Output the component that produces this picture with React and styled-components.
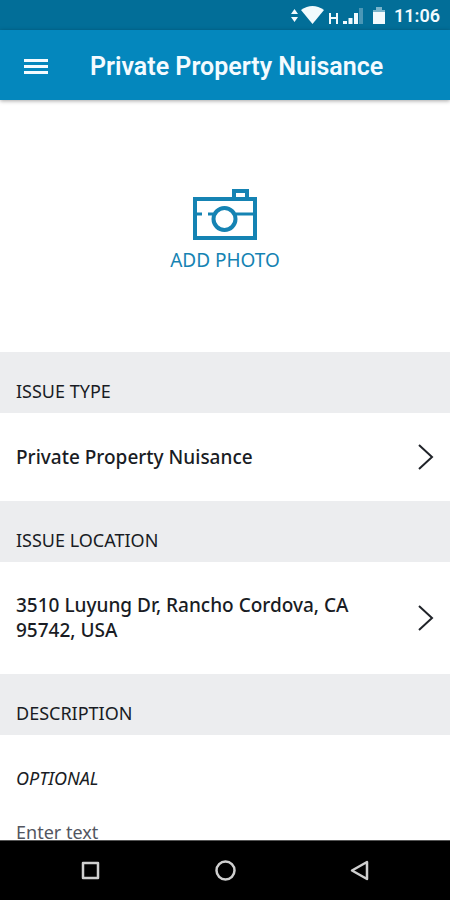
import React from "react";
import styled, { createGlobalStyle } from "styled-components";

const GlobalStyle = createGlobalStyle`
  *, *::before, *::after { box-sizing: border-box; }
  body { margin: 0; background: #fff; }
  button, textarea { font: inherit; }
`;

const Screen = styled.div`
  display: flex;
  flex-direction: column;
  height: 100vh;
  background: #fff;
  color: #191c24;
  font-family: "Noto Sans", "Open Sans", sans-serif;
  font-size: 18px;
  line-height: 25px;
`;

const StatusBar = styled.div`
  display: flex;
  flex: none;
  align-items: center;
  justify-content: flex-end;
  height: 30px;
  padding-right: 10px;
  background: #026e98;
  color: #f2fafd;
  font-family: Roboto, sans-serif;
  font-size: 18px;
  font-weight: 600;

  svg { margin-right: 8px; }
`;

const AppBar = styled.header`
  display: flex;
  flex: none;
  align-items: center;
  gap: 40px;
  height: 70px;
  padding: 4px 22px 0;
  background: #0487bd;
  color: #f4fbff;
  box-shadow: 0 1px 4px rgba(0, 0, 0, 0.35);
  z-index: 1;
`;

const IconButton = styled.button`
  display: flex;
  justify-content: center;
  padding: 0;
  border: 0;
  background: none;
  color: inherit;
  cursor: pointer;
`;

const Title = styled.h1`
  margin: 0;
  font-family: Roboto, sans-serif;
  font-size: 25px;
  font-weight: 600;
  line-height: 32px;
`;

const Content = styled.main`
  flex: 1;
  min-height: 0;
  overflow-y: auto;
  scrollbar-width: none;
`;

const PhotoButton = styled.button`
  display: flex;
  flex-direction: column;
  align-items: center;
  gap: 6px;
  width: 100%;
  height: 252px;
  padding: 89px 0 0;
  border: 0;
  background: none;
  color: #1583b3;
  font-size: 19px;
  cursor: pointer;
`;

const SectionHeading = styled.h2`
  height: 61px;
  margin: 0;
  padding: 27px 16px 0;
  background: #ecedef;
  font-size: 18px;
  font-weight: 400;
`;

const Row = styled.button`
  display: flex;
  align-items: center;
  justify-content: space-between;
  gap: 48px;
  width: 100%;
  min-height: 88px;
  padding: 31px 16px;
  border: 0;
  background: #fff;
  color: inherit;
  font-size: 19px;
  font-weight: 500;
  text-align: left;
  cursor: pointer;

  svg { flex: none; }
`;

const Field = styled.label`
  display: block;
  padding: 31px 16px;
`;

const Hint = styled.span`
  display: block;
  margin-bottom: 29px;
  font-style: italic;
`;

const TextArea = styled.textarea`
  display: block;
  width: 100%;
  height: 100px;
  padding: 0;
  border: 0;
  outline: 0;
  resize: none;
  background: none;
  color: inherit;

  &::placeholder { color: #53565f; opacity: 1; }
`;

const NavBar = styled.nav`
  display: grid;
  flex: none;
  grid-template-columns: repeat(3, 1fr);
  align-items: center;
  height: 60px;
  padding: 0 5%;
  border-top: 1px solid #555;
  background: #000;
  color: #cfcfcf;
`;

const StatusIcons = () => (
  <svg width="98" height="24" viewBox="288 3 98 24" fill="currentColor" aria-hidden="true">
    <path d="M291 14l3.500-5 3.500 5zM291 17l3.500 5 3.500-5z" />
    <path d="M301 10q11.500-8 23 0L312.500 24z" />
    <path d="M330 13v11M337 13v11M330 18h7" fill="none" stroke="currentColor" strokeWidth="2" />
    <path d="M343 21h4v3h-4zM348.500 18h4v6h-4zM354 13h4v11h-4z" />
    <path d="M359 8h4v16h-4z" opacity="0.3" />
    <path d="M376 7h6v3h3v3h-12v-3h3z" opacity="0.5" />
    <path d="M373 12h12v12h-12z" />
  </svg>
);

const MenuIcon = () => (
  <svg width="28" height="24" viewBox="0 0 28 24" fill="currentColor" aria-hidden="true">
    <path d="M2 4h24v3H2zM2 10h24v3H2zM2 16h24v3H2z" />
  </svg>
);

const CameraIcon = () => (
  <svg width="64" height="53" viewBox="0 0 64 53" fill="none" stroke="currentColor" strokeWidth="4" aria-hidden="true">
    <path d="M2 10h60v39H2zM41 9V2h13v7" />
    <path d="M2 25h7M15 25h5M43 25h19" strokeWidth="3" />
    <circle cx="31.500" cy="30" r="11" />
  </svg>
);

const Chevron = () => (
  <svg width="18" height="26" viewBox="0 0 18 26" fill="none" stroke="#202329" strokeWidth="2" aria-hidden="true">
    <path d="M3 1l13 12L3 25" />
  </svg>
);

const navShapes = {
  Recents: <path d="M5 5h15v15H5z" />,
  Home: <circle cx="12.500" cy="12.500" r="9" />,
  Back: <path d="M19 4v17L4 12.500z" />,
};

export default function App() {
  return (
    <Screen>
      <GlobalStyle />
      <StatusBar>
        <StatusIcons />
        <span>11:06</span>
      </StatusBar>
      <AppBar>
        <IconButton type="button" aria-label="Menu"><MenuIcon /></IconButton>
        <Title>Private Property Nuisance</Title>
      </AppBar>
      <Content>
        <PhotoButton type="button">
          <CameraIcon />
          <span>ADD PHOTO</span>
        </PhotoButton>
        <SectionHeading>ISSUE TYPE</SectionHeading>
        <Row type="button">
          <span>Private Property Nuisance</span>
          <Chevron />
        </Row>
        <SectionHeading>ISSUE LOCATION</SectionHeading>
        <Row type="button">
          <span>3510 Luyung Dr, Rancho Cordova, CA 95742, USA</span>
          <Chevron />
        </Row>
        <SectionHeading>DESCRIPTION</SectionHeading>
        <Field>
          <Hint>OPTIONAL</Hint>
          <TextArea placeholder="Enter text" />
        </Field>
      </Content>
      <NavBar>
        {Object.entries(navShapes).map(([name, shape]) => (
          <IconButton key={name} type="button" aria-label={name}>
            <svg width="25" height="25" viewBox="0 0 25 25" fill="none" stroke="currentColor" strokeWidth="2.500" strokeLinejoin="round">
              {shape}
            </svg>
          </IconButton>
        ))}
      </NavBar>
    </Screen>
  );
}
